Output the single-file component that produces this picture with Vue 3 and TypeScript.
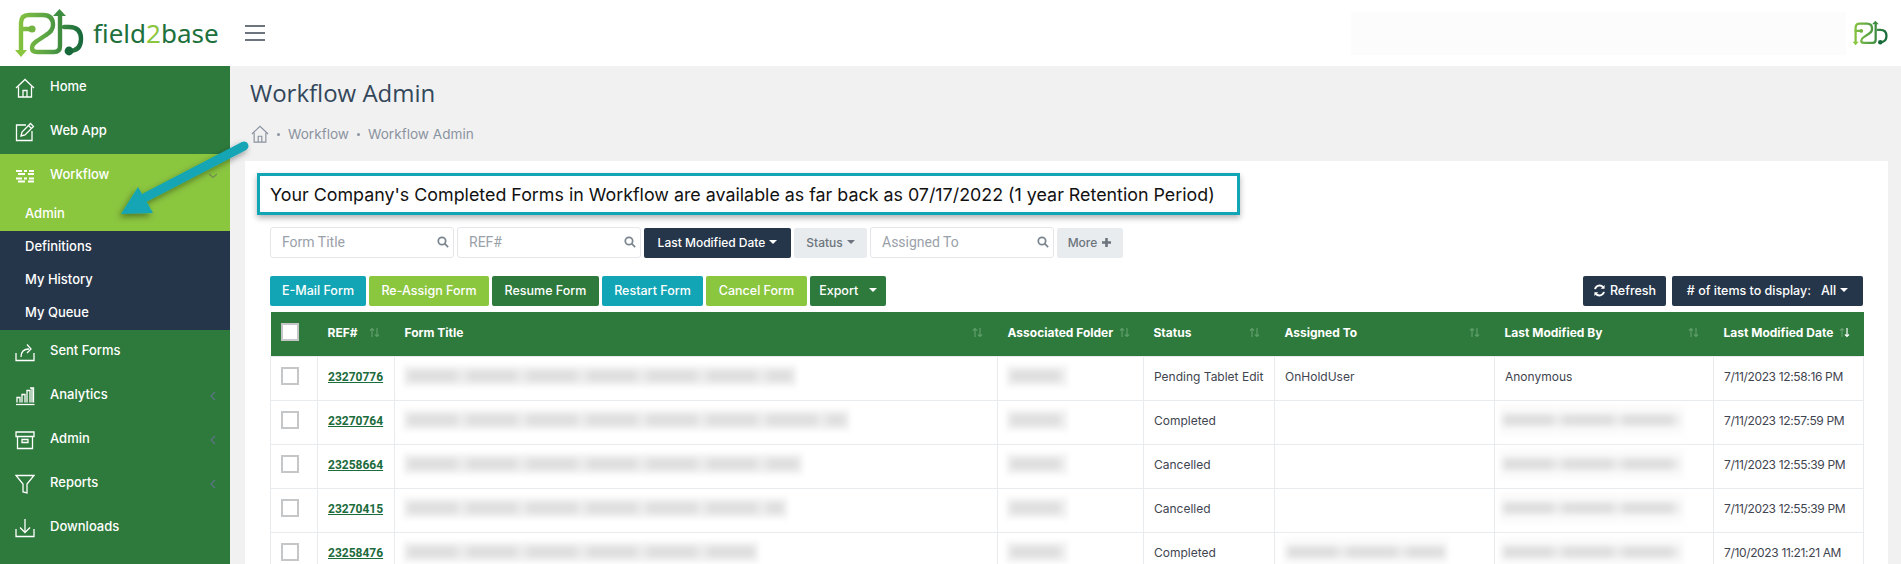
<template>
  <div class="app">
    <svg class="defs" width="0" height="0">
      <defs>
        <linearGradient id="logoGrad" gradientUnits="userSpaceOnUse" x1="15" y1="0" x2="82" y2="0">
          <stop offset="0" stop-color="#8bc63f" />
          <stop offset="0.45" stop-color="#5da644" />
          <stop offset="1" stop-color="#17693c" />
        </linearGradient>
        <symbol id="f2b" viewBox="14 8 70 50">
          <g fill="none" stroke="url(#logoGrad)" stroke-width="4.400" stroke-linecap="round" stroke-linejoin="round">
            <path d="M21 50V23q0-8 8-8h14q10 0 10 10 0 6-7 10l-9 6q-5 3-5 7 0 4 5 4h17q6 0 6-6V14" />
            <path d="M21 29h11" />
            <path d="M64 27h5q12 0 12 12t-12 12" />
          </g>
          <circle cx="32" cy="29" r="3.600" fill="#72b342" />
          <circle cx="69" cy="51" r="4.400" fill="#17693c" />
          <path d="M15 50h12l-6 7z" fill="#8bc63f" />
          <path d="M53 16h13l-6.500-7z" fill="#3d8d40" />
        </symbol>
      </defs>
    </svg>

    <header class="topbar">
      <div class="brand">
        <svg class="logo" width="70" height="50"><use href="#f2b" /></svg>
        <span class="brand-name">field<em>2</em>base</span>
      </div>
      <button class="burger" aria-label="Toggle menu"><i></i><i></i><i></i></button>
      <div class="top-redact"></div>
      <svg class="logo-small" width="36" height="26"><use href="#f2b" /></svg>
    </header>

    <div class="body">
      <aside class="sidebar">
        <template v-for="item in nav" :key="item.label">
          <div class="nav-group" :class="{ open: item.children }">
            <a class="nav-item">
              <svg class="nav-icon" :class="'icon-' + item.icon" width="20" height="20" viewBox="0 0 20 20">
                <path v-for="d in icons[item.icon]" :key="d" :d="d" />
              </svg>
              <span class="nav-label">{{ item.label }}</span>
              <svg v-if="item.chevron" class="chevron" width="8" height="10" viewBox="0 0 8 10">
                <path :d="item.children ? 'M0 3l4 3.500 4-3.500' : 'M6 1L2 5l4 4'" />
              </svg>
            </a>
            <a v-if="item.children" class="sub-item sub-active">{{ item.children[0] }}</a>
          </div>
          <div v-if="item.children" class="submenu">
            <a v-for="c in item.children.slice(1)" :key="c" class="sub-item">{{ c }}</a>
          </div>
        </template>
      </aside>

      <main class="content">
        <h1 class="page-title">Workflow Admin</h1>
        <nav class="crumbs">
          <svg width="18" height="18" viewBox="0 0 20 20" class="crumb-home">
            <path v-for="d in icons.home" :key="d" :d="d" />
          </svg>
          <span class="dot"></span><span>Workflow</span>
          <span class="dot"></span><span>Workflow Admin</span>
        </nav>

        <section class="card">
          <div class="notice">Your Company's Completed Forms in Workflow are available as far back as 07/17/2022 (1 year Retention Period)</div>

          <div class="filters">
            <label class="search" v-for="p in ['Form Title', 'REF#']" :key="p">
              <span>{{ p }}</span>
              <svg width="12" height="12" viewBox="0 0 14 14"><circle cx="5.800" cy="5.800" r="4.300" /><path d="M9 9l4 4" /></svg>
            </label>
            <button class="btn dark date-btn">Last Modified Date <b class="caret"></b></button>
            <button class="btn light status-btn">Status <b class="caret"></b></button>
            <label class="search">
              <span>Assigned To</span>
              <svg width="12" height="12" viewBox="0 0 14 14"><circle cx="5.800" cy="5.800" r="4.300" /><path d="M9 9l4 4" /></svg>
            </label>
            <button class="btn light more-btn">More
              <svg width="11" height="11" viewBox="0 0 11 11"><path d="M5.500 1v9M1 5.500h9" /></svg>
            </button>
          </div>

          <div class="actions">
            <button class="btn teal">E-Mail Form</button>
            <button class="btn lime">Re-Assign Form</button>
            <button class="btn green">Resume Form</button>
            <button class="btn teal">Restart Form</button>
            <button class="btn lime">Cancel Form</button>
            <button class="btn green">Export &nbsp;<b class="caret"></b></button>
            <div class="actions-right">
              <button class="btn dark refresh-btn">
                <svg class="refresh" width="13" height="13" viewBox="0 0 14 14">
                  <path d="M2.200 5.500A5 5 0 0 1 11 3.600M11.800 8.500A5 5 0 0 1 3 10.400" />
                  <path class="fill" d="M12.500 1v4.200H8.300zM1.500 13V8.800h4.200z" />
                </svg>
                Refresh
              </button>
              <button class="btn dark items-btn"># of items to display: &nbsp; All <b class="caret"></b></button>
            </div>
          </div>

          <table class="grid">
            <colgroup>
              <col v-for="w in colWidths" :key="w.id" :style="{ width: w.px + 'px' }" />
            </colgroup>
            <thead>
              <tr>
                <th><span class="check head-check"></span></th>
                <th v-for="h in headers" :key="h">
                  <div class="th-inner">
                    <span>{{ h }}</span>
                    <svg class="sort" :class="{ active: h === 'Last Modified Date' }" width="11" height="11" viewBox="0 0 11 11">
                      <path class="up" d="M3 10V1.500M1 3.500l2-2 2 2" />
                      <path class="down" d="M8 1v8.500M6 7.500l2 2 2-2" />
                    </svg>
                  </div>
                </th>
              </tr>
            </thead>
            <tbody>
              <tr v-for="r in rows" :key="r.ref">
                <td><span class="check"></span></td>
                <td><a class="ref">{{ r.ref }}</a></td>
                <td>
                  <div class="redact title-redact" :style="{ width: r.titleWidth + 'px' }"><i></i></div>
                </td>
                <td>
                  <div class="redact folder-redact"><i></i></div>
                </td>
                <td>{{ r.status }}</td>
                <td>
                  <div v-if="r.assignedBlur" class="redact person-redact assigned"><i></i></div>
                  <template v-else>{{ r.assigned }}</template>
                </td>
                <td>
                  <div v-if="r.modifiedBlur" class="redact person-redact"><i></i></div>
                  <template v-else>{{ r.modifiedBy }}</template>
                </td>
                <td class="date">{{ r.date }}</td>
              </tr>
            </tbody>
          </table>
        </section>
      </main>
    </div>

    <svg class="callout" width="160" height="100" viewBox="0 0 160 100">
      <defs>
        <filter id="calloutShadow" x="-20%" y="-20%" width="140%" height="140%">
          <feDropShadow dx="-2" dy="3" stdDeviation="3" flood-color="#000" flood-opacity="0.4" />
        </filter>
      </defs>
      <g filter="url(#calloutShadow)">
        <path d="M134 11L36 62" stroke="#12a5b5" stroke-width="9" stroke-linecap="round" />
        <path d="M11 79L28 52 43 78z" fill="#12a5b5" />
      </g>
    </svg>
  </div>
</template>

<script setup lang="ts">
interface NavItem {
  label: string;
  icon: string;
  chevron?: boolean;
  children?: string[];
}

interface Row {
  ref: string;
  titleWidth: number;
  status: string;
  assigned?: string;
  assignedBlur?: boolean;
  modifiedBy?: string;
  modifiedBlur?: boolean;
  date: string;
}

const icons: Record<string, string[]> = {
  home: ['M1 10L10 1.500 19 10', 'M3.500 8.500V19h13V8.500', 'M8 19v-6.500h4V19'],
  edit: ['M11 3H1.500v15.500h15.500V9', 'M6 14l1-4 8.500-8.500 3 3L10 13z', 'M13.500 3.500l3 3'],
  flow: ['M1 5h6M9 5h3M14 5h5M3 8h7M13 8h6', 'M1 12.500h6M9 12.500h3M14 12.500h5M3 15.500h7M13 15.500h6'],
  share: ['M1 11v7.500h18V11', 'M6 15c0-5 3-8 8-8', 'M12 2.500L16 7l-4 4'],
  chart: ['M1 18.500h18.500', 'M2 16.500v-5h3v5M7 16.500v-8h3v8M12 16.500V4.500h3v12M17 16.500V2', 'M15 2h3.500v14.500'],
  archive: ['M1 2h18v4.500H1z', 'M2.500 6.500V18.500h15V6.500', 'M7 9.500h6v3H7z'],
  filter: ['M1 1.500h18L12 10v9l-4-1v-8z'],
  download: ['M1 11v7.500h18V11', 'M10 1v13', 'M5 9.500l5 5 5-5'],
};

const nav: NavItem[] = [
  { label: 'Home', icon: 'home' },
  { label: 'Web App', icon: 'edit' },
  { label: 'Workflow', icon: 'flow', chevron: true, children: ['Admin', 'Definitions', 'My History', 'My Queue'] },
  { label: 'Sent Forms', icon: 'share' },
  { label: 'Analytics', icon: 'chart', chevron: true },
  { label: 'Admin', icon: 'archive', chevron: true },
  { label: 'Reports', icon: 'filter', chevron: true },
  { label: 'Downloads', icon: 'download' },
];

const colWidths = [47, 77, 603, 146, 131, 220, 219, 150].map((px, id) => ({ id, px }));

const headers = ['REF#', 'Form Title', 'Associated Folder', 'Status', 'Assigned To', 'Last Modified By', 'Last Modified Date'];

const rows: Row[] = [
  { ref: '23270776', titleWidth: 394, status: 'Pending Tablet Edit', assigned: 'OnHoldUser', modifiedBy: 'Anonymous', date: '7/11/2023 12:58:16 PM' },
  { ref: '23270764', titleWidth: 447, status: 'Completed', modifiedBlur: true, date: '7/11/2023 12:57:59 PM' },
  { ref: '23258664', titleWidth: 400, status: 'Cancelled', modifiedBlur: true, date: '7/11/2023 12:55:39 PM' },
  { ref: '23270415', titleWidth: 385, status: 'Cancelled', modifiedBlur: true, date: '7/11/2023 12:55:39 PM' },
  { ref: '23258476', titleWidth: 356, status: 'Completed', assignedBlur: true, modifiedBlur: true, date: '7/10/2023 11:21:21 AM' },
];
</script>

<style scoped>
.app {
  position: relative;
  height: 100vh;
  overflow: hidden;
  display: flex;
  flex-direction: column;
  background: #f1f1f1;
  font-family: Inter, "Noto Sans", sans-serif;
  color: #3f4550;
}

.defs {
  position: absolute;
}

.topbar {
  height: 66px;
  flex: none;
  display: flex;
  align-items: center;
  background: #fff;
}

.brand {
  width: 245px;
  flex: none;
  display: flex;
  align-items: center;
  gap: 9px;
  padding-left: 14px;
  box-sizing: border-box;
}

.logo {
  flex: none;
}

.brand-name {
  font-family: "Noto Sans", sans-serif;
  font-size: 26px;
  color: #20703c;
  font-weight: 400;
}

.brand-name em {
  font-style: normal;
  color: #8bc63f;
}

.burger {
  width: 20px;
  padding: 0;
  border: 0;
  background: none;
  display: flex;
  flex-direction: column;
  gap: 5px;
}

.burger i {
  display: block;
  height: 2px;
  background: #6c757d;
}

.top-redact {
  width: 495px;
  height: 43px;
  margin-left: auto;
  background: #fcfcfc;
}

.logo-small {
  margin: 0 13px 0 6px;
}

.body {
  flex: 1;
  display: flex;
  min-height: 0;
}

.sidebar {
  width: 230px;
  flex: none;
  background: #2e7a3c;
  color: #fff;
  font-size: 13px;
  font-weight: 500;
}

.nav-group.open {
  background: #8bc63f;
}

.nav-item {
  height: 44px;
  display: flex;
  align-items: center;
  gap: 15px;
  padding: 0 13px 0 15px;
}

.nav-icon {
  flex: none;
  fill: none;
  stroke: #fff;
  stroke-width: 1.300;
}

.icon-flow {
  stroke-width: 2;
}

.nav-label {
  flex: 1;
  padding-bottom: 4px;
}

.chevron {
  fill: none;
  stroke: #5e7484;
  stroke-width: 1.200;
}

.open .chevron {
  stroke: #6f8f50;
}

.sub-item {
  display: flex;
  align-items: center;
  height: 33px;
  padding: 0 0 3px 25px;
  box-sizing: border-box;
}

.submenu {
  background: #26364a;
}

.content {
  flex: 1;
  min-width: 0;
  padding-left: 15px;
}

.page-title {
  margin: 9px 0 0 5px;
  font-family: "Open Sans", sans-serif;
  font-size: 24px;
  line-height: 36px;
  font-weight: 400;
  color: #33475b;
}

.crumbs {
  display: flex;
  align-items: center;
  gap: 8px;
  height: 24px;
  margin: 11px 0 15px 6px;
  font-size: 13.600px;
  color: #8a93a0;
}

.crumb-home {
  fill: none;
  stroke: #8a93a0;
  stroke-width: 1.300;
}

.dot {
  width: 3px;
  height: 3px;
  border-radius: 50%;
  background: #8a93a0;
}

.card {
  margin-right: 13px;
  padding: 12px 25px 0;
  background: #fff;
  height: 100%;
}

.notice {
  width: 983px;
  height: 42px;
  margin-left: -13px;
  box-sizing: border-box;
  display: flex;
  align-items: center;
  padding-left: 10px;
  border: 3px solid #12a5b5;
  box-shadow: 0 3px 6px rgba(0, 0, 0, 0.3);
  font-size: 17.850px;
  color: #111;
  white-space: nowrap;
}

.filters {
  display: flex;
  align-items: stretch;
  gap: 3px;
  height: 31px;
  margin-top: 12px;
}

.search {
  width: 184px;
  box-sizing: border-box;
  display: flex;
  align-items: center;
  justify-content: space-between;
  padding: 0 4px 2px 11px;
  border: 1px solid #e4e6ea;
  border-radius: 3px;
  font-family: Roboto, "Liberation Sans", sans-serif;
  font-size: 14px;
  color: #9aa1a9;
}

.search svg {
  fill: none;
  stroke: #7b8590;
  stroke-width: 2;
}

.btn {
  height: 30px;
  padding: 0 0 2px;
  border: 0;
  border-radius: 2px;
  font-family: inherit;
  font-size: 12.500px;
  font-weight: 500;
  color: #fff;
  white-space: nowrap;
  display: inline-flex;
  align-items: center;
  justify-content: center;
  gap: 4px;
}

.filters .btn {
  height: 30px;
  margin-top: 1px;
  font-size: 12px;
}

.btn.dark {
  background: #26364a;
}

.btn.light {
  background: #e9ecef;
  color: #6c757d;
}

.btn.teal {
  background: #12a5b5;
}

.btn.lime {
  background: #8bc63f;
}

.btn.green {
  background: #2e7a3c;
}

.date-btn {
  width: 147px;
}

.status-btn {
  width: 73px;
}

.more-btn {
  width: 66px;
}

.more-btn svg {
  fill: none;
  stroke: #6c757d;
  stroke-width: 2.600;
}

.caret {
  display: inline-block;
  width: 0;
  height: 0;
  border-left: 4px solid transparent;
  border-right: 4px solid transparent;
  border-top: 4px solid currentColor;
}

.actions {
  display: flex;
  gap: 3px;
  margin-top: 18px;
}

.actions > .btn {
  width: 101px;
}

.actions > .btn:nth-child(1) {
  width: 96px;
}

.actions > .btn:nth-child(2) {
  width: 120px;
}

.actions > .btn:nth-child(3) {
  width: 107px;
}

.actions > .btn:nth-child(6) {
  width: 76px;
}

.actions-right {
  margin-left: auto;
  display: flex;
  gap: 6px;
}

.refresh {
  fill: none;
  stroke: #fff;
  stroke-width: 2;
}

.refresh .fill {
  fill: #fff;
  stroke: none;
}

.refresh-btn {
  width: 83px;
}

.items-btn {
  width: 191px;
}

.grid {
  width: 1593px;
  margin-top: 6px;
  border-collapse: collapse;
  table-layout: fixed;
  font-size: 12px;
}

.grid th {
  height: 44px;
  padding: 0 15px 3px 10px;
  box-sizing: border-box;
  background: #2e7a3c;
  color: #fff;
  font-size: 12px;
  font-weight: 700;
  text-align: left;
  white-space: nowrap;
}

.th-inner {
  display: flex;
  align-items: center;
  justify-content: space-between;
  gap: 6px;
}

.sort {
  flex: none;
  fill: none;
  stroke-width: 1.200;
  stroke: #5f9d6a;
}

.sort.active .down {
  stroke: #fff;
}

.grid td {
  height: 44px;
  box-sizing: border-box;
  padding: 0 10px 4px;
  border: 1px solid #e9ecef;
  white-space: nowrap;
}

.grid td.date {
  letter-spacing: -0.350px;
}

.check {
  display: block;
  width: 18px;
  height: 18px;
  box-sizing: border-box;
  border: 2px solid #c4c6c8;
  background: #fff;
}

.ref {
  font-family: Roboto, sans-serif;
  font-size: 12px;
  font-weight: 700;
  color: #1c6b3c;
  text-decoration: underline;
}

.redact {
  height: 22px;
  background: #f6f6f6;
  overflow: hidden;
  display: flex;
  align-items: center;
  margin-left: -2px;
  filter: blur(2.500px);
}

.redact i {
  display: block;
  width: 100%;
  height: 12px;
  margin: 0 4px;
  background: repeating-linear-gradient(90deg, #dedede 0 50px, #ebebeb 50px 60px);
  filter: blur(2px);
}

.folder-redact {
  width: 62px;
}

.person-redact {
  width: 185px;
  height: 30px;
  margin-left: -6px;
  background: #fbfbfb;
}

.assigned {
  width: 166px;
  margin-left: -2px;
}

.callout {
  position: absolute;
  left: 110px;
  top: 135px;
  pointer-events: none;
}
</style>

<style>
html, body {
  margin: 0;
  overflow: hidden;
}
</style>
